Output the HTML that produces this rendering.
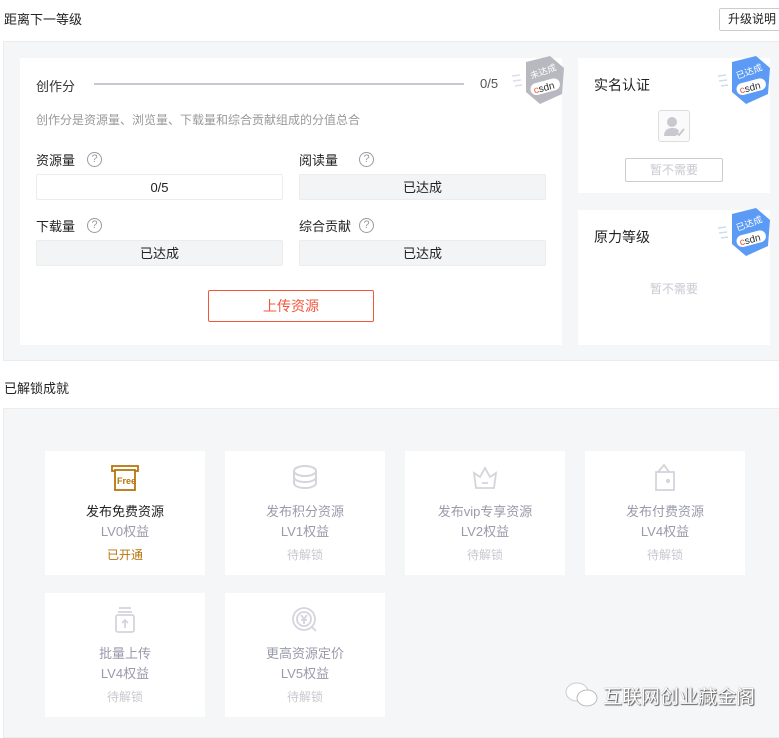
<!DOCTYPE html>
<html><head><meta charset="utf-8"><style>
*{margin:0;padding:0;box-sizing:border-box}
body{width:779px;height:729px;overflow:hidden;background:#fff;font-family:"Liberation Sans","Noto Sans CJK SC",sans-serif;color:#222;position:relative;font-size:13px}
.a{position:absolute}
.panel{background:#f5f6f8;border:1px solid #ececec}
.card{background:#fff}
.q{display:inline-block;width:15px;height:15px;border:1.5px solid #9a9aa6;border-radius:50%;font-size:11px;line-height:12px;text-align:center;color:#9a9aa6}
.box{height:26px;line-height:26px;text-align:center;font-size:13px;border:1px solid #ececec;border-radius:2px}
.g{background:#f3f4f6}
.ach{width:160px;height:124px;background:#fff;text-align:center}
.ach .t{position:absolute;left:0;right:0;top:50px;font-size:13px;color:#999aaa}
.ach .l{position:absolute;left:0;right:0;top:70px;font-size:13px;color:#999aaa}
.ach .s{position:absolute;left:0;right:0;top:95px;font-size:12px;color:#c8c8d0}
.ach svg{position:absolute;left:65px;top:12px}
</style></head><body>
<div class="a" style="left:4px;top:9px;font-size:13px">距离下一等级</div>
<div class="a" style="left:719px;top:8px;width:62px;height:23px;border:1px solid #ccc;border-radius:2px;font-size:12px;line-height:21px;padding-left:8px">升级说明</div>

<div class="a panel" style="left:3px;top:41px;width:780px;height:320px"></div>
<div class="a card" style="left:20px;top:58px;width:542px;height:287px"></div>
<div class="a" style="left:36px;top:76px;font-size:13px;color:#333">创作分</div>
<div class="a" style="left:94px;top:83px;width:370px;height:2px;background:#c8c8d2"></div>
<div class="a" style="left:480px;top:76px;font-size:13px;color:#555">0/5</div>
<div class="a" style="left:36px;top:111px;font-size:12px;color:#999">创作分是资源量、浏览量、下载量和综合贡献组成的分值总合</div>

<div class="a" style="left:36px;top:150px">资源量</div><div class="a q" style="left:87px;top:152px">?</div>
<div class="a" style="left:299px;top:150px">阅读量</div><div class="a q" style="left:359px;top:152px">?</div>
<div class="a box" style="left:36px;top:174px;width:247px">0/5</div>
<div class="a box g" style="left:299px;top:174px;width:247px">已达成</div>
<div class="a" style="left:36px;top:216px">下载量</div><div class="a q" style="left:87px;top:218px">?</div>
<div class="a" style="left:299px;top:216px">综合贡献</div><div class="a q" style="left:359px;top:218px">?</div>
<div class="a box g" style="left:36px;top:240px;width:247px">已达成</div>
<div class="a box g" style="left:299px;top:240px;width:247px">已达成</div>
<div class="a" style="left:208px;top:290px;width:166px;height:32px;border:1px solid #f0573c;border-radius:2px;text-align:center;line-height:30px;color:#f0573c;font-size:14px">上传资源</div>

<div class="a card" style="left:578px;top:58px;width:192px;height:135px"></div>
<div class="a" style="left:594px;top:75px;font-size:14px">实名认证</div>
<div class="a" style="left:658px;top:110px;width:32px;height:32px;border:1px solid #ddd;border-radius:3px;background:#fafafa">
<svg width="30" height="30" viewBox="0 0 30 30"><circle cx="13" cy="11" r="5" fill="#c8c8d0"/><path d="M5 25c0-6 4-8 8-8s6 1 7 3l-3 5z" fill="#c8c8d0"/><path d="M17 21l3 3 5-6" stroke="#c8c8d0" stroke-width="2" fill="none"/></svg></div>
<div class="a" style="left:625px;top:158px;width:98px;height:24px;border:1px solid #ccccd4;border-radius:2px;text-align:center;line-height:22px;color:#c8c8d0;font-size:12px">暂不需要</div>

<div class="a card" style="left:578px;top:210px;width:192px;height:135px"></div>
<div class="a" style="left:594px;top:227px;font-size:14px">原力等级</div>
<div class="a" style="left:578px;top:280px;width:192px;text-align:center;color:#c8c8d0;font-size:12px">暂不需要</div>

<svg class="a" style="left:510px;top:56px" width="54" height="50" viewBox="0 0 54 50"><g stroke="#dde" stroke-width="1.5"><line x1="2" y1="20" x2="10" y2="19"/><line x1="3" y1="25" x2="11" y2="24"/><line x1="5" y1="30" x2="12" y2="29"/></g><path d="M16 6l24-6 14 12-2 26-22 10-14-12z" fill="#b8b8c0"/><text x="21" y="20" font-size="9" fill="#fff" transform="rotate(-20 30 20)">未达成</text><rect x="20" y="25" width="30" height="12" rx="6" fill="#fff" transform="rotate(-15 34 30)"/><text x="23" y="35" font-size="10" fill="#333" transform="rotate(-15 34 30)"><tspan fill="#f0573c">c</tspan>sdn</text></svg>
<svg class="a" style="left:716px;top:56px" width="54" height="50" viewBox="0 0 54 50"><g stroke="#cde" stroke-width="1.5"><line x1="2" y1="20" x2="10" y2="19"/><line x1="3" y1="25" x2="11" y2="24"/><line x1="5" y1="30" x2="12" y2="29"/></g><path d="M16 6l24-6 14 12-2 26-22 10-14-12z" fill="#5b9af5"/><text x="21" y="20" font-size="9" fill="#fff" transform="rotate(-20 30 20)">已达成</text><rect x="20" y="25" width="30" height="12" rx="6" fill="#fff" transform="rotate(-15 34 30)"/><text x="23" y="35" font-size="10" fill="#333" transform="rotate(-15 34 30)"><tspan fill="#f0573c">c</tspan>sdn</text></svg>
<svg class="a" style="left:716px;top:208px" width="54" height="50" viewBox="0 0 54 50"><g stroke="#cde" stroke-width="1.5"><line x1="2" y1="20" x2="10" y2="19"/><line x1="3" y1="25" x2="11" y2="24"/><line x1="5" y1="30" x2="12" y2="29"/></g><path d="M16 6l24-6 14 12-2 26-22 10-14-12z" fill="#5b9af5"/><text x="21" y="20" font-size="9" fill="#fff" transform="rotate(-20 30 20)">已达成</text><rect x="20" y="25" width="30" height="12" rx="6" fill="#fff" transform="rotate(-15 34 30)"/><text x="23" y="35" font-size="10" fill="#333" transform="rotate(-15 34 30)"><tspan fill="#f0573c">c</tspan>sdn</text></svg>

<div class="a" style="left:4px;top:378px;font-size:13px">已解锁成就</div>
<div class="a panel" style="left:3px;top:408px;width:780px;height:330px"></div>

<div class="a ach" style="left:45px;top:451px">
<svg width="30" height="30" viewBox="0 0 30 30"><rect x="2" y="3" width="26" height="5" fill="none" stroke="#b8740c" stroke-width="1.8"/><rect x="5" y="7" width="20" height="20" fill="#fff" stroke="#b8740c" stroke-width="1.8"/><text x="7" y="21" font-size="9" font-weight="bold" fill="#b8740c">Free</text></svg>
<div class="t" style="color:#222">发布免费资源</div><div class="l">LV0权益</div><div class="s" style="color:#b8740c">已开通</div></div>
<div class="a ach" style="left:225px;top:451px">
<svg width="30" height="30" viewBox="0 0 30 30" fill="none" stroke="#d4d4dc" stroke-width="2"><ellipse cx="15" cy="8" rx="11" ry="5"/><path d="M4 8v12c0 3 5 5 11 5s11-2 11-5V8M4 14c0 3 5 5 11 5s11-2 11-5"/></svg>
<div class="t">发布积分资源</div><div class="l">LV1权益</div><div class="s">待解锁</div></div>
<div class="a ach" style="left:405px;top:451px">
<svg width="30" height="30" viewBox="0 0 30 30" fill="none" stroke="#d4d4dc" stroke-width="1.8"><path d="M4 10l6 4 5-9 5 9 6-4-2 15H6z"/><line x1="12" y1="20" x2="18" y2="20"/></svg>
<div class="t">发布vip专享资源</div><div class="l">LV2权益</div><div class="s">待解锁</div></div>
<div class="a ach" style="left:585px;top:451px">
<svg width="30" height="30" viewBox="0 0 30 30" fill="none" stroke="#d4d4dc" stroke-width="1.8"><rect x="6" y="9" width="18" height="18"/><path d="M8 9l6-7 5 7"/><circle cx="18" cy="18" r="1.2"/></svg>
<div class="t">发布付费资源</div><div class="l">LV4权益</div><div class="s">待解锁</div></div>
<div class="a ach" style="left:45px;top:593px">
<svg width="30" height="30" viewBox="0 0 30 30" fill="none" stroke="#d4d4dc" stroke-width="1.8"><line x1="9" y1="3" x2="21" y2="3"/><line x1="8" y1="7" x2="22" y2="7"/><rect x="6" y="10" width="18" height="17" rx="2"/><path d="M15 23v-8M12 18l3-3 3 3"/></svg>
<div class="t">批量上传</div><div class="l">LV4权益</div><div class="s">待解锁</div></div>
<div class="a ach" style="left:225px;top:593px">
<svg width="30" height="30" viewBox="0 0 30 30" fill="none" stroke="#d4d4dc" stroke-width="1.8"><circle cx="14" cy="14" r="11"/><circle cx="14" cy="14" r="7"/><path d="M11 10l3 4 3-4M11 15h6M14 14v5M22 22l4 4"/></svg>
<div class="t">更高资源定价</div><div class="l">LV5权益</div><div class="s">待解锁</div></div>

<svg class="a" style="left:565px;top:681px" width="34" height="28" viewBox="0 0 34 28"><ellipse cx="12" cy="11" rx="11" ry="9" fill="#fff" stroke="#ccc"/><ellipse cx="22" cy="17" rx="10" ry="8" fill="#fff" stroke="#bbb"/></svg>
<div class="a" style="left:603px;top:682px;font-size:19px;color:#fff;text-shadow:1px 1px 1px #555,0 0 1px #777">互联网创业藏金阁</div>
</body></html>
